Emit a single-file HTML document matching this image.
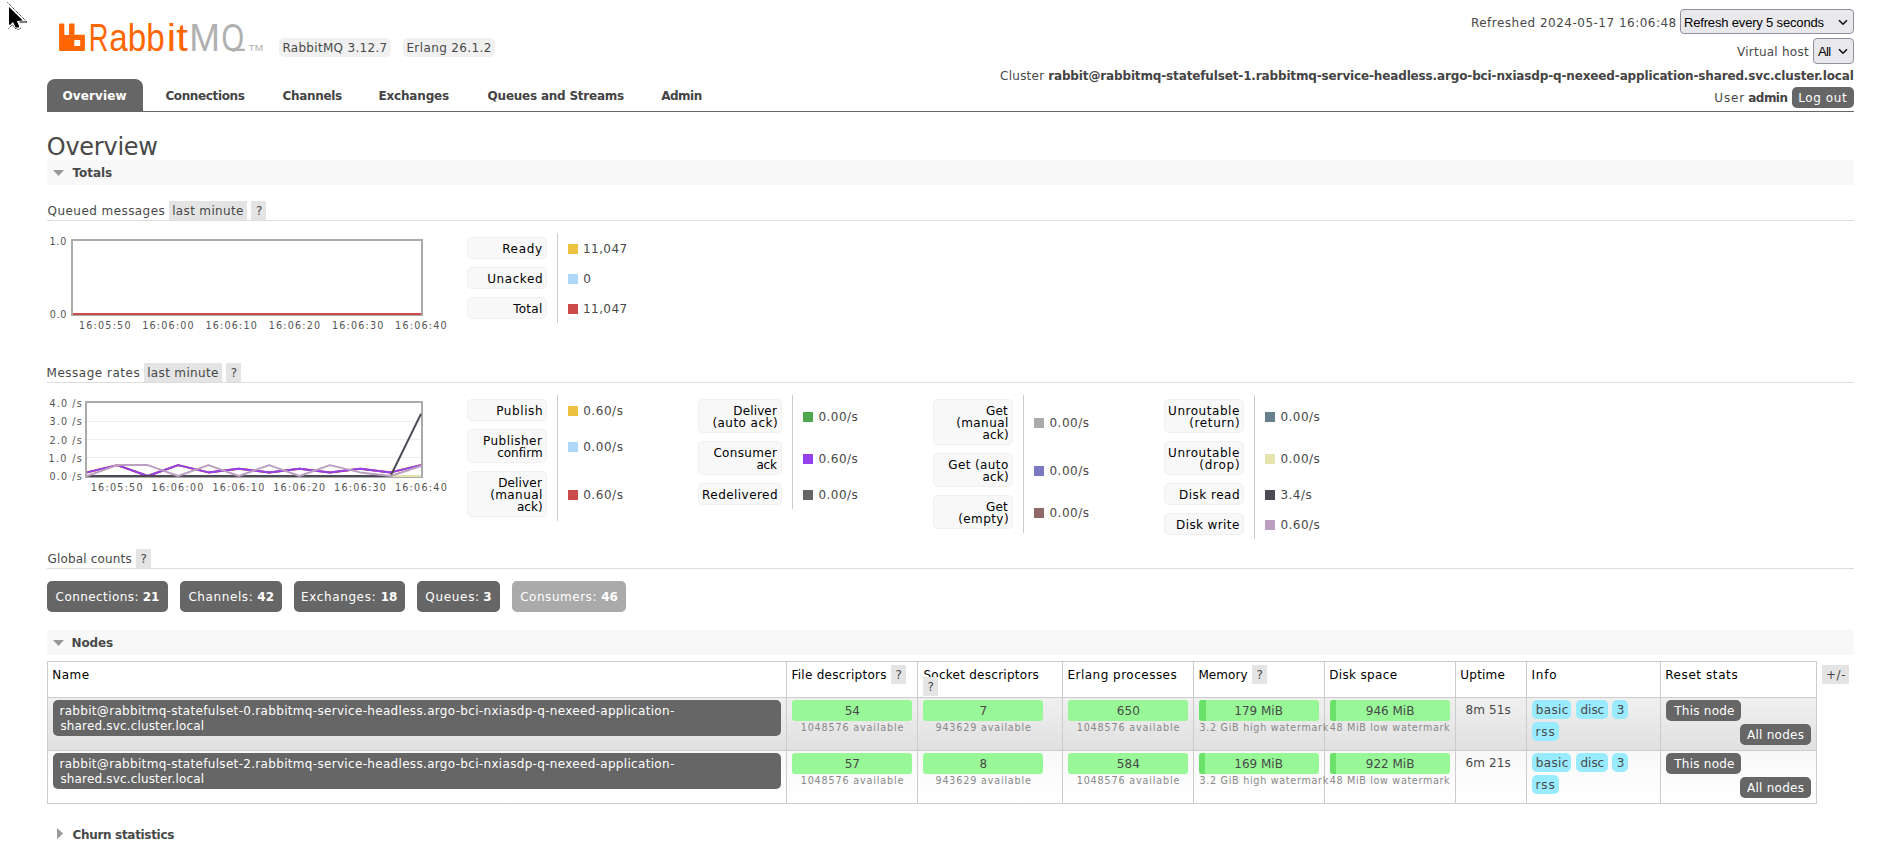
<!DOCTYPE html>
<html lang="en"><head><meta charset="utf-8"><title>RabbitMQ Management</title>
<style>
html,body{margin:0;padding:0;background:#fff}
body{width:1883px;height:858px;position:relative;overflow:hidden;font-family:"DejaVu Sans", "Liberation Sans", sans-serif;font-size:12px;color:#484848}
.r{position:absolute;box-sizing:border-box}
.t{position:absolute;white-space:nowrap;line-height:normal;margin:0;padding:0}
svg{position:absolute;overflow:visible}
</style></head><body>
<svg style="left:0;top:0" width="40" height="40" viewBox="0 0 40 40"><polygon points="9,7 9,24.7 10.2,24.7 13,22 15.6,27.6 18.9,27.6 18.9,25.5 16.8,21 22.8,20.5" fill="#000"/><path d="M7.5,2.5 L26.5,21.5 M8.5,28.5 L12.5,24.5 L14.5,28 L18.5,29.5 L21.5,27.5 M15.5,30.5 L15.6,30.6" stroke="#000" stroke-width="1" stroke-dasharray="1 1" fill="none"/><path d="M19.5,22 H27" stroke="#000" stroke-width="1"/></svg>
<svg style="left:0;top:0" width="300" height="60"><defs><clipPath id="lq"><rect x="180" y="10" width="80" height="41.8"/></clipPath></defs><path fill="#f60" fill-rule="evenodd" d="M59.1,24.3 Q59.1,23.5 59.9,23.5 H63.5 Q64.3,23.5 64.3,24.3 V34.2 Q64.3,35 65.1,35 H68.3 Q69.1,35 69.1,34.2 V24.3 Q69.1,23.5 69.9,23.5 H73.7 Q74.5,23.5 74.5,24.3 V34.8 H84.1 Q84.9,34.8 84.9,35.6 V50.2 Q84.9,51 84.1,51 H59.9 Q59.1,51 59.1,50.2 Z M74.3,39.9 H80.2 V45.9 H74.3 Z"/><text y="51" font-family="Liberation Sans, sans-serif" font-size="39.6" fill="#f60"><tspan x="88.64" textLength="19.65" lengthAdjust="spacingAndGlyphs">R</tspan><tspan x="109.36" textLength="55.39" lengthAdjust="spacingAndGlyphs">abb</tspan><tspan x="166.88" textLength="21.02" lengthAdjust="spacingAndGlyphs">it</tspan></text><text y="51" font-family="Liberation Sans, sans-serif" font-size="39.6" fill="#b0b0b0" clip-path="url(#lq)"><tspan x="189.2" textLength="30.77" lengthAdjust="spacingAndGlyphs">M</tspan><tspan x="221.57" textLength="22.54" lengthAdjust="spacingAndGlyphs">Q</tspan></text><rect x="236" y="48.7" width="8.8" height="2.3" fill="#b0b0b0"/><text x="248.6" y="51" font-family="Liberation Sans, sans-serif" font-size="9.5" fill="#b0b0b0" textLength="14.6" lengthAdjust="spacingAndGlyphs">TM</text></svg>
<div class="r" style="left:279px;top:38px;width:112px;height:19px;background:#f0f0f0;border-radius:5px;"></div>
<div class="r" style="left:403px;top:38px;width:92px;height:19px;background:#f0f0f0;border-radius:5px;"></div>
<div class="r" style="left:1680px;top:9px;width:174px;height:25px;background:#e9e9ed;border:1px solid #8f8f9d;border-radius:4px"></div>
<svg style="left:1838px;top:19px" width="10" height="7" viewBox="0 0 10 7"><path d="M1,1.2 L5,5.2 L9,1.2" stroke="#111" stroke-width="1.6" fill="none"/></svg>
<div class="r" style="left:1813px;top:38px;width:41px;height:26px;background:#e9e9ed;border:1px solid #8f8f9d;border-radius:4px"></div>
<svg style="left:1838px;top:48px" width="10" height="7" viewBox="0 0 10 7"><path d="M1,1.2 L5,5.2 L9,1.2" stroke="#111" stroke-width="1.6" fill="none"/></svg>
<div class="r" style="left:1792px;top:87px;width:62px;height:21px;background:#666;border-radius:5px;"></div>
<div class="r" style="left:47px;top:79px;width:96px;height:32px;background:#666;border-radius:8px 8px 0 0;"></div>
<div class="r" style="left:47px;top:111px;width:1807px;height:1px;background:#666;"></div>
<div class="r" style="left:47px;top:160px;width:1807px;height:25px;background:#f8f8f8;"></div>
<svg style="left:53px;top:170.0px" width="11" height="6" viewBox="0 0 11 6"><polygon points="0,0 11,0 5.5,6" fill="#999"/></svg>
<div class="r" style="left:47px;top:630px;width:1807px;height:25px;background:#f8f8f8;"></div>
<svg style="left:53px;top:640.0px" width="11" height="6" viewBox="0 0 11 6"><polygon points="0,0 11,0 5.5,6" fill="#999"/></svg>
<svg style="left:57px;top:828px" width="6" height="12" viewBox="0 0 6 12"><polygon points="0,0 6,5.6 0,11.2" fill="#999"/></svg>
<div class="r" style="left:47px;top:220px;width:1807px;height:1px;background:#ddd;"></div>
<div class="r" style="left:169px;top:201px;width:78px;height:19px;background:#e4e4e4;"></div>
<div class="r" style="left:251px;top:201px;width:15px;height:19px;background:#e4e4e4;"></div>
<div class="r" style="left:47px;top:382px;width:1807px;height:1px;background:#ddd;"></div>
<div class="r" style="left:144px;top:363px;width:78px;height:19px;background:#e4e4e4;"></div>
<div class="r" style="left:226.3px;top:363px;width:14.699999999999989px;height:19px;background:#e4e4e4;"></div>
<div class="r" style="left:47px;top:568px;width:1807px;height:1px;background:#ddd;"></div>
<div class="r" style="left:136px;top:549px;width:15px;height:19px;background:#e4e4e4;"></div>
<div class="r" style="left:71px;top:239px;width:352px;height:77px;border:2px solid #aaa;background:#fff"></div>
<div class="r" style="left:73px;top:313px;width:348px;height:2px;background:#cb4b4b;"></div>
<div class="r" style="left:85px;top:401px;width:338px;height:77px;border:2px solid #aaa;background:#fff"></div>
<div class="r" style="left:87px;top:421px;width:334px;height:1px;background:#eee;"></div>
<div class="r" style="left:87px;top:439px;width:334px;height:1px;background:#eee;"></div>
<div class="r" style="left:87px;top:457px;width:334px;height:1px;background:#eee;"></div>
<svg style="left:0;top:0" width="430" height="480"><defs><clipPath id="c2"><rect x="86" y="402" width="336" height="75"/></clipPath></defs><g clip-path="url(#c2)"><polyline points="87.0,472.4 117.4,465.1 147.7,476.0 178.1,465.1 208.4,472.4 238.8,468.7 269.2,472.4 299.5,468.7 329.9,472.4 360.2,468.7 390.6,472.4 421.0,465.1" fill="none" stroke="#edc240" stroke-width="2" stroke-linejoin="round"/><polyline points="87.0,476.0 117.4,476.0 147.7,476.0 178.1,476.0 208.4,476.0 238.8,476.0 269.2,476.0 299.5,476.0 329.9,476.0 360.2,476.0 390.6,476.0 421.0,476.0" fill="none" stroke="#afd8f8" stroke-width="2" stroke-linejoin="round"/><polyline points="87.0,472.4 117.4,465.1 147.7,476.0 178.1,465.1 208.4,472.4 238.8,468.7 269.2,472.4 299.5,468.7 329.9,472.4 360.2,468.7 390.6,472.4 421.0,465.1" fill="none" stroke="#cb4b4b" stroke-width="2" stroke-linejoin="round"/><polyline points="87.0,476.0 117.4,476.0 147.7,476.0 178.1,476.0 208.4,476.0 238.8,476.0 269.2,476.0 299.5,476.0 329.9,476.0 360.2,476.0 390.6,476.0 421.0,476.0" fill="none" stroke="#4da74d" stroke-width="2" stroke-linejoin="round"/><polyline points="87.0,472.4 117.4,465.1 147.7,476.0 178.1,465.1 208.4,472.4 238.8,468.7 269.2,472.4 299.5,468.7 329.9,472.4 360.2,468.7 390.6,472.4 421.0,465.1" fill="none" stroke="#9440ed" stroke-width="2" stroke-linejoin="round"/><polyline points="87.0,476.0 117.4,476.0 147.7,476.0 178.1,476.0 208.4,476.0 238.8,476.0 269.2,476.0 299.5,476.0 329.9,476.0 360.2,476.0 390.6,476.0 421.0,476.0" fill="none" stroke="#e5e4ae" stroke-width="2" stroke-linejoin="round"/><polyline points="87.0,476.0 117.4,476.0 147.7,476.0 178.1,476.0 208.4,476.0 238.8,476.0 269.2,476.0 299.5,476.0 329.9,476.0 360.2,476.0 390.6,476.0 421.0,413.9" fill="none" stroke="#4b4a55" stroke-width="2" stroke-linejoin="round"/><polyline points="87.0,476.0 117.4,465.1 147.7,465.1 178.1,476.0 208.4,465.1 238.8,476.0 269.2,465.1 299.5,476.0 329.9,465.1 360.2,472.4 390.6,476.0 421.0,466.0" fill="none" stroke="#bba0c1" stroke-width="2" stroke-linejoin="round"/></g></svg>
<div class="r" style="left:557px;top:233px;width:1px;height:90px;background:#ccc;"></div>
<div class="r" style="left:467px;top:237px;width:80px;height:22px;background:#f8f8f8;border:1px solid #f0f0f0;border-radius:5px"></div>
<div class="r" style="left:568px;top:244.0px;width:10px;height:10.0px;background:#edc240;"></div>
<div class="r" style="left:467px;top:267px;width:80px;height:22px;background:#f8f8f8;border:1px solid #f0f0f0;border-radius:5px"></div>
<div class="r" style="left:568px;top:274.0px;width:10px;height:10.0px;background:#afd8f8;"></div>
<div class="r" style="left:467px;top:297px;width:80px;height:22px;background:#f8f8f8;border:1px solid #f0f0f0;border-radius:5px"></div>
<div class="r" style="left:568px;top:304.0px;width:10px;height:10.0px;background:#cb4b4b;"></div>
<div class="r" style="left:557px;top:395px;width:1px;height:126px;background:#ccc;"></div>
<div class="r" style="left:467px;top:399px;width:80px;height:22px;background:#f8f8f8;border:1px solid #f0f0f0;border-radius:5px"></div>
<div class="r" style="left:568px;top:406.0px;width:10px;height:10.0px;background:#edc240;"></div>
<div class="r" style="left:467px;top:429px;width:80px;height:34px;background:#f8f8f8;border:1px solid #f0f0f0;border-radius:5px"></div>
<div class="r" style="left:568px;top:442.0px;width:10px;height:10.0px;background:#afd8f8;"></div>
<div class="r" style="left:467px;top:471px;width:80px;height:46px;background:#f8f8f8;border:1px solid #f0f0f0;border-radius:5px"></div>
<div class="r" style="left:568px;top:490.0px;width:10px;height:10.0px;background:#cb4b4b;"></div>
<div class="r" style="left:792px;top:395px;width:1px;height:114px;background:#ccc;"></div>
<div class="r" style="left:698px;top:399px;width:84px;height:34px;background:#f8f8f8;border:1px solid #f0f0f0;border-radius:5px"></div>
<div class="r" style="left:803px;top:412.0px;width:10px;height:10.0px;background:#4da74d;"></div>
<div class="r" style="left:698px;top:441px;width:84px;height:34px;background:#f8f8f8;border:1px solid #f0f0f0;border-radius:5px"></div>
<div class="r" style="left:803px;top:454.0px;width:10px;height:10.0px;background:#9440ed;"></div>
<div class="r" style="left:698px;top:483px;width:84px;height:22px;background:#f8f8f8;border:1px solid #f0f0f0;border-radius:5px"></div>
<div class="r" style="left:803px;top:490.0px;width:10px;height:10.0px;background:#666;"></div>
<div class="r" style="left:1023px;top:395px;width:1px;height:138px;background:#ccc;"></div>
<div class="r" style="left:933px;top:399px;width:80px;height:46px;background:#f8f8f8;border:1px solid #f0f0f0;border-radius:5px"></div>
<div class="r" style="left:1034px;top:418.0px;width:10px;height:10.0px;background:#aaa;"></div>
<div class="r" style="left:933px;top:453px;width:80px;height:34px;background:#f8f8f8;border:1px solid #f0f0f0;border-radius:5px"></div>
<div class="r" style="left:1034px;top:466.0px;width:10px;height:10.0px;background:#7c79c3;"></div>
<div class="r" style="left:933px;top:495px;width:80px;height:34px;background:#f8f8f8;border:1px solid #f0f0f0;border-radius:5px"></div>
<div class="r" style="left:1034px;top:508.0px;width:10px;height:10.0px;background:#8e6767;"></div>
<div class="r" style="left:1254px;top:395px;width:1px;height:144px;background:#ccc;"></div>
<div class="r" style="left:1164px;top:399px;width:80px;height:34px;background:#f8f8f8;border:1px solid #f0f0f0;border-radius:5px"></div>
<div class="r" style="left:1265px;top:412.0px;width:10px;height:10.0px;background:#67808e;"></div>
<div class="r" style="left:1164px;top:441px;width:80px;height:34px;background:#f8f8f8;border:1px solid #f0f0f0;border-radius:5px"></div>
<div class="r" style="left:1265px;top:454.0px;width:10px;height:10.0px;background:#e5e4ae;"></div>
<div class="r" style="left:1164px;top:483px;width:80px;height:22px;background:#f8f8f8;border:1px solid #f0f0f0;border-radius:5px"></div>
<div class="r" style="left:1265px;top:490.0px;width:10px;height:10.0px;background:#4b4a55;"></div>
<div class="r" style="left:1164px;top:513px;width:80px;height:22px;background:#f8f8f8;border:1px solid #f0f0f0;border-radius:5px"></div>
<div class="r" style="left:1265px;top:520.0px;width:10px;height:10.0px;background:#bba0c1;"></div>
<div class="r" style="left:47px;top:581px;width:121px;height:31px;background:#666;border-radius:5px;"></div>
<div class="r" style="left:180px;top:581px;width:102px;height:31px;background:#666;border-radius:5px;"></div>
<div class="r" style="left:294px;top:581px;width:111px;height:31px;background:#666;border-radius:5px;"></div>
<div class="r" style="left:417px;top:581px;width:83px;height:31px;background:#666;border-radius:5px;"></div>
<div class="r" style="left:512px;top:581px;width:114px;height:31px;background:#aaa;border-radius:5px;"></div>
<div class="r" style="left:47px;top:661px;width:1770px;height:143px;background:#ccc;"></div>
<div class="r" style="left:48px;top:662px;width:738px;height:35px;background:#fff;"></div>
<div class="r" style="left:787px;top:662px;width:130px;height:35px;background:#fff;"></div>
<div class="r" style="left:918px;top:662px;width:144px;height:35px;background:#fff;"></div>
<div class="r" style="left:1063px;top:662px;width:130px;height:35px;background:#fff;"></div>
<div class="r" style="left:1194px;top:662px;width:130px;height:35px;background:#fff;"></div>
<div class="r" style="left:1325px;top:662px;width:130px;height:35px;background:#fff;"></div>
<div class="r" style="left:1456px;top:662px;width:70px;height:35px;background:#fff;"></div>
<div class="r" style="left:1527px;top:662px;width:133px;height:35px;background:#fff;"></div>
<div class="r" style="left:1661px;top:662px;width:155px;height:35px;background:#fff;"></div>
<div class="r" style="left:48px;top:698px;width:738px;height:52px;background:linear-gradient(#f0f0f0,#e0e0e0);"></div>
<div class="r" style="left:787px;top:698px;width:130px;height:52px;background:linear-gradient(#f0f0f0,#e0e0e0);"></div>
<div class="r" style="left:918px;top:698px;width:144px;height:52px;background:linear-gradient(#f0f0f0,#e0e0e0);"></div>
<div class="r" style="left:1063px;top:698px;width:130px;height:52px;background:linear-gradient(#f0f0f0,#e0e0e0);"></div>
<div class="r" style="left:1194px;top:698px;width:130px;height:52px;background:linear-gradient(#f0f0f0,#e0e0e0);"></div>
<div class="r" style="left:1325px;top:698px;width:130px;height:52px;background:linear-gradient(#f0f0f0,#e0e0e0);"></div>
<div class="r" style="left:1456px;top:698px;width:70px;height:52px;background:linear-gradient(#f0f0f0,#e0e0e0);"></div>
<div class="r" style="left:1527px;top:698px;width:133px;height:52px;background:linear-gradient(#f0f0f0,#e0e0e0);"></div>
<div class="r" style="left:1661px;top:698px;width:155px;height:52px;background:linear-gradient(#f0f0f0,#e0e0e0);"></div>
<div class="r" style="left:48px;top:751px;width:738px;height:52px;background:linear-gradient(#f8f8f8,#fff);"></div>
<div class="r" style="left:787px;top:751px;width:130px;height:52px;background:linear-gradient(#f8f8f8,#fff);"></div>
<div class="r" style="left:918px;top:751px;width:144px;height:52px;background:linear-gradient(#f8f8f8,#fff);"></div>
<div class="r" style="left:1063px;top:751px;width:130px;height:52px;background:linear-gradient(#f8f8f8,#fff);"></div>
<div class="r" style="left:1194px;top:751px;width:130px;height:52px;background:linear-gradient(#f8f8f8,#fff);"></div>
<div class="r" style="left:1325px;top:751px;width:130px;height:52px;background:linear-gradient(#f8f8f8,#fff);"></div>
<div class="r" style="left:1456px;top:751px;width:70px;height:52px;background:linear-gradient(#f8f8f8,#fff);"></div>
<div class="r" style="left:1527px;top:751px;width:133px;height:52px;background:linear-gradient(#f8f8f8,#fff);"></div>
<div class="r" style="left:1661px;top:751px;width:155px;height:52px;background:linear-gradient(#f8f8f8,#fff);"></div>
<div class="r" style="left:891px;top:665px;width:15px;height:19px;background:#e4e4e4;"></div>
<div class="r" style="left:1252px;top:665px;width:15px;height:19px;background:#e4e4e4;"></div>
<div class="r" style="left:1822px;top:665px;width:27px;height:19px;background:#e4e4e4;"></div>
<div class="r" style="left:53px;top:700px;width:728px;height:36px;background:#666;border-radius:5px;"></div>
<div class="r" style="left:792px;top:700px;width:120px;height:21px;background:#98f898;border-radius:3px;"></div>
<div class="r" style="left:923px;top:700px;width:120px;height:21px;background:#98f898;border-radius:3px;"></div>
<div class="r" style="left:1068px;top:700px;width:120px;height:21px;background:#98f898;border-radius:3px;"></div>
<div class="r" style="left:1199px;top:700px;width:120px;height:21px;background:#98f898;border-radius:3px;"></div>
<div class="r" style="left:1199px;top:700px;width:6.5px;height:21px;background:#6ae26a;border-radius:3px 0 0 3px;"></div>
<div class="r" style="left:1330px;top:700px;width:120px;height:21px;background:#98f898;border-radius:3px;"></div>
<div class="r" style="left:1330px;top:700px;width:6px;height:21px;background:#6ae26a;border-radius:3px 0 0 3px;"></div>
<div class="r" style="left:1532px;top:700px;width:39.40000000000009px;height:19px;background:#99ebff;border-radius:5px;"></div>
<div class="r" style="left:1576px;top:700px;width:32px;height:19px;background:#99ebff;border-radius:5px;"></div>
<div class="r" style="left:1612.4px;top:700px;width:15.599999999999909px;height:19px;background:#99ebff;border-radius:5px;"></div>
<div class="r" style="left:1532px;top:722px;width:26.700000000000045px;height:19px;background:#99ebff;border-radius:5px;"></div>
<div class="r" style="left:1666px;top:700px;width:75px;height:21px;background:#666;border-radius:5px;"></div>
<div class="r" style="left:1740px;top:724px;width:71px;height:21px;background:#666;border-radius:5px;"></div>
<div class="r" style="left:53px;top:753px;width:728px;height:36px;background:#666;border-radius:5px;"></div>
<div class="r" style="left:792px;top:753px;width:120px;height:21px;background:#98f898;border-radius:3px;"></div>
<div class="r" style="left:923px;top:753px;width:120px;height:21px;background:#98f898;border-radius:3px;"></div>
<div class="r" style="left:1068px;top:753px;width:120px;height:21px;background:#98f898;border-radius:3px;"></div>
<div class="r" style="left:1199px;top:753px;width:120px;height:21px;background:#98f898;border-radius:3px;"></div>
<div class="r" style="left:1199px;top:753px;width:6px;height:21px;background:#6ae26a;border-radius:3px 0 0 3px;"></div>
<div class="r" style="left:1330px;top:753px;width:120px;height:21px;background:#98f898;border-radius:3px;"></div>
<div class="r" style="left:1330px;top:753px;width:6px;height:21px;background:#6ae26a;border-radius:3px 0 0 3px;"></div>
<div class="r" style="left:1532px;top:753px;width:39.40000000000009px;height:19px;background:#99ebff;border-radius:5px;"></div>
<div class="r" style="left:1576px;top:753px;width:32px;height:19px;background:#99ebff;border-radius:5px;"></div>
<div class="r" style="left:1612.4px;top:753px;width:15.599999999999909px;height:19px;background:#99ebff;border-radius:5px;"></div>
<div class="r" style="left:1532px;top:775px;width:26.700000000000045px;height:19px;background:#99ebff;border-radius:5px;"></div>
<div class="r" style="left:1666px;top:753px;width:75px;height:21px;background:#666;border-radius:5px;"></div>
<div class="r" style="left:1740px;top:777px;width:71px;height:21px;background:#666;border-radius:5px;"></div>
<span class="t" style="left:282.40px;top:41px;letter-spacing:0.304px;">RabbitMQ 3.12.7</span>
<span class="t" style="left:406.40px;top:41px;letter-spacing:0.386px;">Erlang 26.1.2</span>
<span class="t" style="left:1470.90px;top:16px;letter-spacing:0.491px;">Refreshed 2024-05-17 16:06:48</span>
<span class="t" style="left:1684.00px;top:15px;font-size:13px;color:#000;font-family:'Liberation Sans', sans-serif;letter-spacing:-0.172px;">Refresh every 5 seconds</span>
<span class="t" style="left:1737.00px;top:45px;letter-spacing:0.243px;">Virtual host</span>
<span class="t" style="left:1817.90px;top:44px;font-size:13px;color:#000;font-family:'Liberation Sans', sans-serif;letter-spacing:-0.630px;">All</span>
<span class="t" style="left:1000.10px;top:69px;letter-spacing:0.240px;">Cluster</span>
<span class="t" style="left:1048.20px;top:69px;font-weight:700;color:#444;letter-spacing:-0.141px;">rabbit@rabbitmq-statefulset-1.rabbitmq-service-headless.argo-bci-nxiasdp-q-nexeed-application-shared.svc.cluster.local</span>
<span class="t" style="left:1714.30px;top:91px;letter-spacing:0.861px;">User</span>
<span class="t" style="left:1748.30px;top:91px;font-weight:700;color:#444;letter-spacing:-0.551px;">admin</span>
<span class="t" style="left:1798.20px;top:91px;color:#fff;letter-spacing:0.584px;">Log out</span>
<span class="t" style="left:62.50px;top:89px;font-weight:700;color:#fff;letter-spacing:0.121px;">Overview</span>
<span class="t" style="left:165.40px;top:89px;font-weight:700;color:#444;letter-spacing:-0.373px;">Connections</span>
<span class="t" style="left:282.60px;top:89px;font-weight:700;color:#444;letter-spacing:-0.341px;">Channels</span>
<span class="t" style="left:378.50px;top:89px;font-weight:700;color:#444;letter-spacing:-0.183px;">Exchanges</span>
<span class="t" style="left:487.60px;top:89px;font-weight:700;color:#444;letter-spacing:-0.225px;">Queues and Streams</span>
<span class="t" style="left:661.20px;top:89px;font-weight:700;color:#444;letter-spacing:-0.499px;">Admin</span>
<span class="t" style="left:46.80px;top:133px;font-size:24px;letter-spacing:-0.266px;">Overview</span>
<span class="t" style="left:72.50px;top:166px;font-weight:700;letter-spacing:-0.057px;">Totals</span>
<span class="t" style="left:71.50px;top:636px;font-weight:700;letter-spacing:-0.129px;">Nodes</span>
<span class="t" style="left:72.50px;top:828px;font-weight:700;letter-spacing:-0.318px;">Churn statistics</span>
<span class="t" style="left:47.60px;top:204px;letter-spacing:0.437px;">Queued messages</span>
<span class="t" style="left:172.20px;top:204px;letter-spacing:0.340px;">last minute</span>
<span class="t" style="left:255.90px;top:204px;">?</span>
<span class="t" style="left:46.60px;top:366px;letter-spacing:0.501px;">Message rates</span>
<span class="t" style="left:147.20px;top:366px;letter-spacing:0.340px;">last minute</span>
<span class="t" style="left:230.70px;top:366px;">?</span>
<span class="t" style="left:47.60px;top:552px;letter-spacing:0.154px;">Global counts</span>
<span class="t" style="left:140.50px;top:552px;">?</span>
<span class="t" style="left:49.40px;top:236px;font-size:9.6px;color:#545454;letter-spacing:0.873px;">1.0</span>
<span class="t" style="left:49.70px;top:309px;font-size:9.6px;color:#545454;letter-spacing:0.723px;">0.0</span>
<span class="t" style="left:79.00px;top:320px;font-size:9.6px;color:#545454;letter-spacing:1.202px;">16:05:50</span>
<span class="t" style="left:142.22px;top:320px;font-size:9.6px;color:#545454;letter-spacing:1.202px;">16:06:00</span>
<span class="t" style="left:205.44px;top:320px;font-size:9.6px;color:#545454;letter-spacing:1.202px;">16:06:10</span>
<span class="t" style="left:268.66px;top:320px;font-size:9.6px;color:#545454;letter-spacing:1.202px;">16:06:20</span>
<span class="t" style="left:331.88px;top:320px;font-size:9.6px;color:#545454;letter-spacing:1.202px;">16:06:30</span>
<span class="t" style="left:395.10px;top:320px;font-size:9.6px;color:#545454;letter-spacing:1.202px;">16:06:40</span>
<span class="t" style="left:49.60px;top:471px;font-size:9.6px;color:#545454;letter-spacing:1.112px;">0.0 /s</span>
<span class="t" style="left:48.60px;top:453px;font-size:9.6px;color:#545454;letter-spacing:1.312px;">1.0 /s</span>
<span class="t" style="left:49.60px;top:435px;font-size:9.6px;color:#545454;letter-spacing:1.112px;">2.0 /s</span>
<span class="t" style="left:49.60px;top:416px;font-size:9.6px;color:#545454;letter-spacing:1.112px;">3.0 /s</span>
<span class="t" style="left:49.60px;top:398px;font-size:9.6px;color:#545454;letter-spacing:1.112px;">4.0 /s</span>
<span class="t" style="left:90.70px;top:482px;font-size:9.6px;color:#545454;letter-spacing:1.259px;">16:05:50</span>
<span class="t" style="left:151.54px;top:482px;font-size:9.6px;color:#545454;letter-spacing:1.259px;">16:06:00</span>
<span class="t" style="left:212.38px;top:482px;font-size:9.6px;color:#545454;letter-spacing:1.259px;">16:06:10</span>
<span class="t" style="left:273.22px;top:482px;font-size:9.6px;color:#545454;letter-spacing:1.259px;">16:06:20</span>
<span class="t" style="left:334.06px;top:482px;font-size:9.6px;color:#545454;letter-spacing:1.259px;">16:06:30</span>
<span class="t" style="left:394.90px;top:482px;font-size:9.6px;color:#545454;letter-spacing:1.259px;">16:06:40</span>
<span class="t" style="left:502.20px;top:242px;color:#000;letter-spacing:0.637px;">Ready</span>
<span class="t" style="left:583.00px;top:242.0px;letter-spacing:0.429px;">11,047</span>
<span class="t" style="left:487.20px;top:272px;color:#000;letter-spacing:0.576px;">Unacked</span>
<span class="t" style="left:583.20px;top:272.0px;">0</span>
<span class="t" style="left:513.20px;top:302px;color:#000;letter-spacing:0.252px;">Total</span>
<span class="t" style="left:583.00px;top:302.0px;letter-spacing:0.429px;">11,047</span>
<span class="t" style="left:496.20px;top:404px;color:#000;letter-spacing:0.589px;">Publish</span>
<span class="t" style="left:583.20px;top:404.0px;letter-spacing:0.548px;">0.60/s</span>
<span class="t" style="left:483.00px;top:434px;color:#000;letter-spacing:0.468px;">Publisher</span>
<span class="t" style="left:497.20px;top:446px;color:#000;letter-spacing:-0.021px;">confirm</span>
<span class="t" style="left:583.20px;top:440.0px;letter-spacing:0.548px;">0.00/s</span>
<span class="t" style="left:498.20px;top:476px;color:#000;letter-spacing:0.154px;">Deliver</span>
<span class="t" style="left:490.20px;top:488px;color:#000;letter-spacing:0.402px;">(manual</span>
<span class="t" style="left:516.90px;top:500px;color:#000;letter-spacing:0.033px;">ack)</span>
<span class="t" style="left:583.20px;top:488.0px;letter-spacing:0.548px;">0.60/s</span>
<span class="t" style="left:733.30px;top:404px;color:#000;letter-spacing:0.137px;">Deliver</span>
<span class="t" style="left:712.40px;top:416px;color:#000;letter-spacing:0.455px;">(auto ack)</span>
<span class="t" style="left:818.40px;top:410.0px;letter-spacing:0.488px;">0.00/s</span>
<span class="t" style="left:713.40px;top:446px;color:#000;letter-spacing:0.321px;">Consumer</span>
<span class="t" style="left:756.50px;top:458px;color:#000;letter-spacing:-0.276px;">ack</span>
<span class="t" style="left:818.40px;top:452.0px;letter-spacing:0.488px;">0.60/s</span>
<span class="t" style="left:702.10px;top:488px;color:#000;letter-spacing:0.441px;">Redelivered</span>
<span class="t" style="left:818.40px;top:488.0px;letter-spacing:0.488px;">0.00/s</span>
<span class="t" style="left:986.10px;top:404px;color:#000;letter-spacing:0.059px;">Get</span>
<span class="t" style="left:956.20px;top:416px;color:#000;letter-spacing:0.402px;">(manual</span>
<span class="t" style="left:982.60px;top:428px;color:#000;letter-spacing:0.133px;">ack)</span>
<span class="t" style="left:1049.50px;top:416.0px;letter-spacing:0.488px;">0.00/s</span>
<span class="t" style="left:948.20px;top:458px;color:#000;letter-spacing:0.394px;">Get (auto</span>
<span class="t" style="left:982.60px;top:470px;color:#000;letter-spacing:0.133px;">ack)</span>
<span class="t" style="left:1049.50px;top:464.0px;letter-spacing:0.488px;">0.00/s</span>
<span class="t" style="left:986.10px;top:500px;color:#000;letter-spacing:0.059px;">Get</span>
<span class="t" style="left:958.20px;top:512px;color:#000;letter-spacing:0.420px;">(empty)</span>
<span class="t" style="left:1049.50px;top:506.0px;letter-spacing:0.488px;">0.00/s</span>
<span class="t" style="left:1168.10px;top:404px;color:#000;letter-spacing:0.532px;">Unroutable</span>
<span class="t" style="left:1189.30px;top:416px;color:#000;letter-spacing:0.604px;">(return)</span>
<span class="t" style="left:1280.40px;top:410.0px;letter-spacing:0.488px;">0.00/s</span>
<span class="t" style="left:1168.10px;top:446px;color:#000;letter-spacing:0.532px;">Unroutable</span>
<span class="t" style="left:1199.30px;top:458px;color:#000;letter-spacing:0.734px;">(drop)</span>
<span class="t" style="left:1280.40px;top:452.0px;letter-spacing:0.488px;">0.00/s</span>
<span class="t" style="left:1179.10px;top:488px;color:#000;letter-spacing:0.475px;">Disk read</span>
<span class="t" style="left:1280.40px;top:488.0px;letter-spacing:0.493px;">3.4/s</span>
<span class="t" style="left:1176.10px;top:518px;color:#000;letter-spacing:0.380px;">Disk write</span>
<span class="t" style="left:1280.40px;top:518.0px;letter-spacing:0.488px;">0.60/s</span>
<span class="t" style="left:55.60px;top:590px;color:#fff;letter-spacing:0.423px;">Connections:</span>
<span class="t" style="left:142.75px;top:590px;font-weight:700;color:#fff;">21</span>
<span class="t" style="left:188.40px;top:590px;color:#fff;letter-spacing:0.598px;">Channels:</span>
<span class="t" style="left:257.35px;top:590px;font-weight:700;color:#fff;">42</span>
<span class="t" style="left:301.00px;top:590px;color:#fff;letter-spacing:0.624px;">Exchanges:</span>
<span class="t" style="left:380.65px;top:590px;font-weight:700;color:#fff;">18</span>
<span class="t" style="left:425.30px;top:590px;color:#fff;letter-spacing:0.688px;">Queues:</span>
<span class="t" style="left:483.30px;top:590px;font-weight:700;color:#fff;">3</span>
<span class="t" style="left:520.20px;top:590px;color:#fff;letter-spacing:0.529px;">Consumers:</span>
<span class="t" style="left:601.25px;top:590px;font-weight:700;color:#fff;">46</span>
<span class="t" style="left:52.30px;top:668px;color:#000;letter-spacing:0.460px;">Name</span>
<span class="t" style="left:791.40px;top:668px;color:#000;letter-spacing:0.286px;">File descriptors</span>
<span class="t" style="left:895.40px;top:668px;">?</span>
<span class="t" style="left:923.40px;top:668px;color:#000;letter-spacing:0.265px;">Socket descriptors</span>
<div class="r" style="left:923px;top:677px;width:15px;height:19px;background:#e4e4e4"></div>
<span class="t" style="left:927.40px;top:680px;">?</span>
<span class="t" style="left:1067.40px;top:668px;color:#000;letter-spacing:0.491px;">Erlang processes</span>
<span class="t" style="left:1198.40px;top:668px;color:#000;letter-spacing:0.060px;">Memory</span>
<span class="t" style="left:1256.40px;top:668px;">?</span>
<span class="t" style="left:1329.20px;top:668px;color:#000;letter-spacing:0.343px;">Disk space</span>
<span class="t" style="left:1460.30px;top:668px;color:#000;letter-spacing:0.214px;">Uptime</span>
<span class="t" style="left:1531.40px;top:668px;color:#000;letter-spacing:0.810px;">Info</span>
<span class="t" style="left:1665.20px;top:668px;color:#000;letter-spacing:0.585px;">Reset stats</span>
<span class="t" style="left:1825.90px;top:668px;letter-spacing:0.601px;">+/-</span>
<span class="t" style="left:59.40px;top:704px;color:#fff;letter-spacing:0.318px;">rabbit@rabbitmq-statefulset-0.rabbitmq-service-headless.argo-bci-nxiasdp-q-nexeed-application-</span>
<span class="t" style="left:60.40px;top:719px;color:#fff;letter-spacing:0.165px;">shared.svc.cluster.local</span>
<span class="t" style="left:844.68px;top:704px;">54</span>
<span class="t" style="left:800.70px;top:722px;font-size:9.6px;color:#888;letter-spacing:0.851px;">1048576 available</span>
<span class="t" style="left:979.50px;top:704px;">7</span>
<span class="t" style="left:935.50px;top:722px;font-size:9.6px;color:#888;letter-spacing:0.828px;">943629 available</span>
<span class="t" style="left:1116.87px;top:704px;">650</span>
<span class="t" style="left:1076.70px;top:722px;font-size:9.6px;color:#888;letter-spacing:0.851px;">1048576 available</span>
<span class="t" style="left:1234.30px;top:704px;">179 MiB</span>
<span class="t" style="left:1199.40px;top:722px;font-size:9.6px;color:#888;letter-spacing:0.717px;">3.2 GiB high watermark</span>
<span class="t" style="left:1365.80px;top:704px;">946 MiB</span>
<span class="t" style="left:1329.70px;top:722px;font-size:9.6px;color:#888;letter-spacing:0.674px;">48 MiB low watermark</span>
<span class="t" style="left:1465.50px;top:703px;letter-spacing:0.138px;">8m 51s</span>
<span class="t" style="left:1535.70px;top:703px;letter-spacing:0.361px;">basic</span>
<span class="t" style="left:1580.50px;top:703px;letter-spacing:-0.034px;">disc</span>
<span class="t" style="left:1616.70px;top:703px;">3</span>
<span class="t" style="left:1535.50px;top:725px;letter-spacing:0.907px;">rss</span>
<span class="t" style="left:1674.30px;top:704px;color:#fff;letter-spacing:0.237px;">This node</span>
<span class="t" style="left:1747.00px;top:728px;color:#fff;letter-spacing:0.258px;">All nodes</span>
<span class="t" style="left:59.40px;top:757px;color:#fff;letter-spacing:0.318px;">rabbit@rabbitmq-statefulset-2.rabbitmq-service-headless.argo-bci-nxiasdp-q-nexeed-application-</span>
<span class="t" style="left:60.40px;top:772px;color:#fff;letter-spacing:0.165px;">shared.svc.cluster.local</span>
<span class="t" style="left:844.68px;top:757px;">57</span>
<span class="t" style="left:800.70px;top:775px;font-size:9.6px;color:#888;letter-spacing:0.851px;">1048576 available</span>
<span class="t" style="left:979.50px;top:757px;">8</span>
<span class="t" style="left:935.50px;top:775px;font-size:9.6px;color:#888;letter-spacing:0.828px;">943629 available</span>
<span class="t" style="left:1116.87px;top:757px;">584</span>
<span class="t" style="left:1076.70px;top:775px;font-size:9.6px;color:#888;letter-spacing:0.851px;">1048576 available</span>
<span class="t" style="left:1234.30px;top:757px;">169 MiB</span>
<span class="t" style="left:1199.40px;top:775px;font-size:9.6px;color:#888;letter-spacing:0.717px;">3.2 GiB high watermark</span>
<span class="t" style="left:1365.80px;top:757px;">922 MiB</span>
<span class="t" style="left:1329.70px;top:775px;font-size:9.6px;color:#888;letter-spacing:0.674px;">48 MiB low watermark</span>
<span class="t" style="left:1465.50px;top:756px;letter-spacing:0.138px;">6m 21s</span>
<span class="t" style="left:1535.70px;top:756px;letter-spacing:0.361px;">basic</span>
<span class="t" style="left:1580.50px;top:756px;letter-spacing:-0.034px;">disc</span>
<span class="t" style="left:1616.70px;top:756px;">3</span>
<span class="t" style="left:1535.50px;top:778px;letter-spacing:0.907px;">rss</span>
<span class="t" style="left:1674.30px;top:757px;color:#fff;letter-spacing:0.237px;">This node</span>
<span class="t" style="left:1747.00px;top:781px;color:#fff;letter-spacing:0.258px;">All nodes</span>
</body></html>
